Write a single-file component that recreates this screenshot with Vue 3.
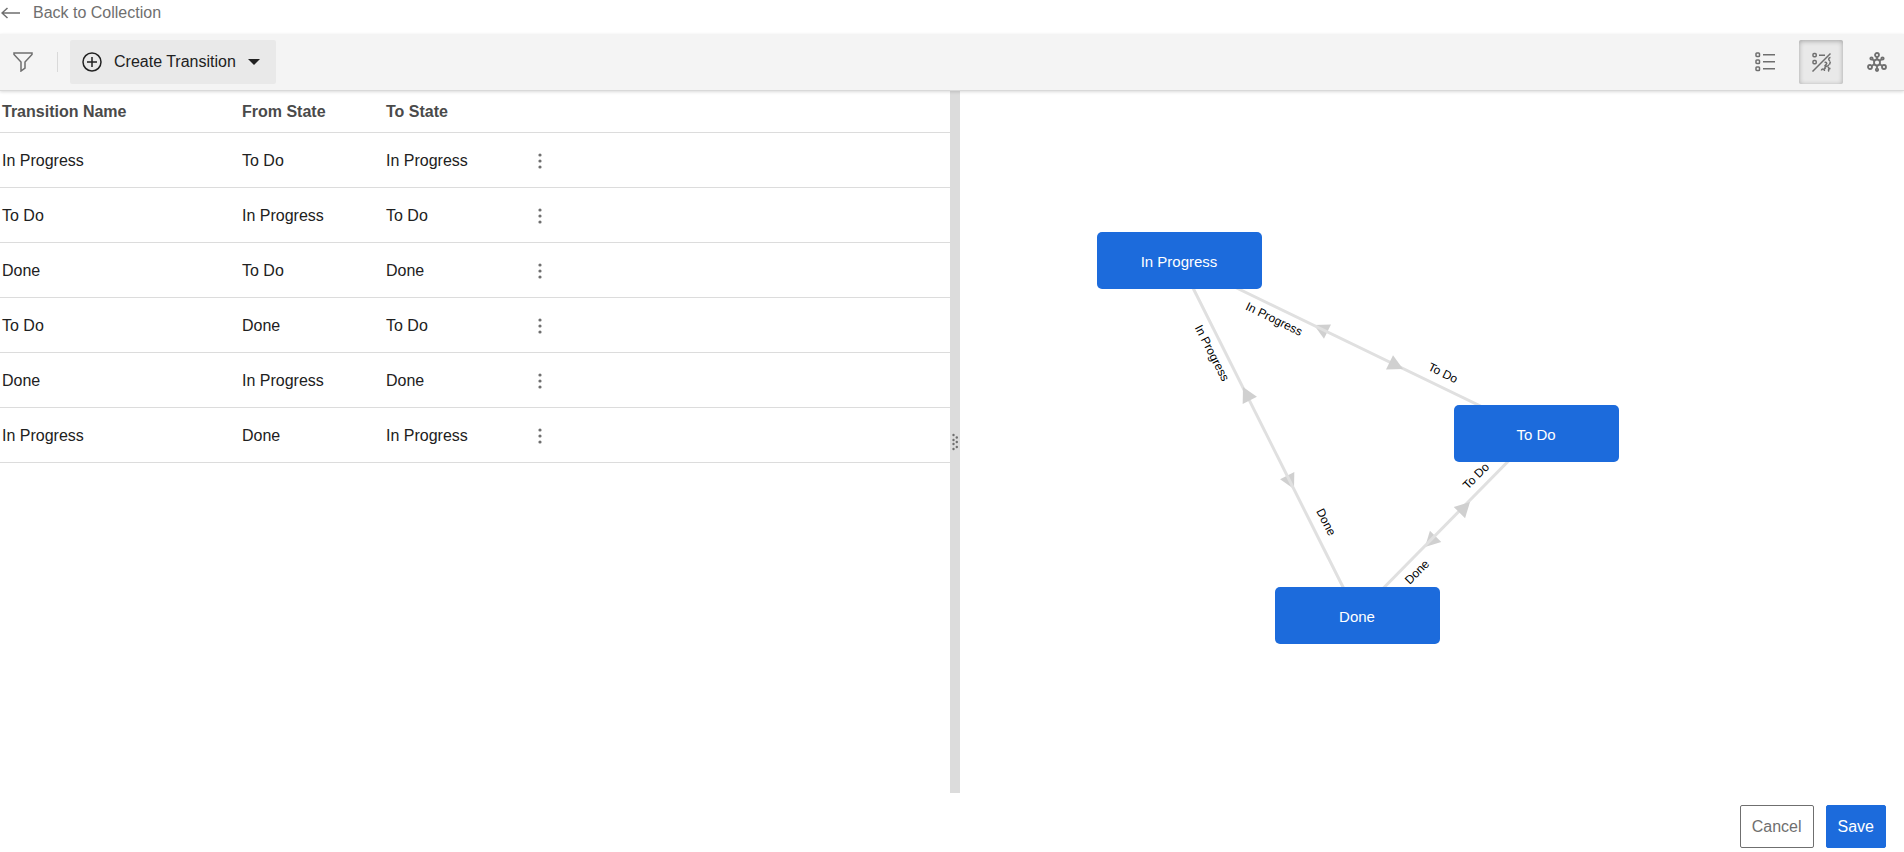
<template>
  <div class="workflow-page">
    <a href="#" class="back-link">
      <svg class="back-icon" width="20" height="12" viewBox="0 0 20 12">
        <path d="M19 6H1M6.500 1L1 6l5.500 5" />
      </svg>
      <span>Back to Collection</span>
    </a>

    <header class="toolbar">
      <button class="icon-button filter-button" aria-label="Filter">
        <svg width="20" height="20" viewBox="0 0 20 20">
          <path d="M1 1h18v1.500l-7 7.500v6l-4 3v-9L1 2.500z" />
        </svg>
      </button>
      <span class="divider"></span>
      <button class="create-button">
        <svg width="20" height="20" viewBox="0 0 20 20">
          <circle cx="10" cy="10" r="9" />
          <path d="M10 5v10M5 10h10" />
        </svg>
        <span>Create Transition</span>
        <span class="caret"></span>
      </button>

      <div class="view-buttons">
        <button
          v-for="view in views"
          :key="view"
          :class="['icon-button', { selected: view === currentView }]"
          :aria-label="view"
          @click="currentView = view"
        >
          <svg v-if="view === 'List'" width="20" height="20" viewBox="0 0 20 20">
            <rect v-for="y in [1, 8, 15]" :key="y" x="1" :y="y" width="3.500" height="3.500" rx="0.800" />
            <path d="M8 2.700h12M8 9.700h12M8 16.700h12" />
          </svg>
          <svg v-else-if="view === 'Split'" width="20" height="20" viewBox="0 0 20 20">
            <rect x="2" y="1.500" width="3.200" height="3.200" rx="1" />
            <rect x="2" y="8.500" width="3.200" height="3.200" rx="1" />
            <path d="M8 3.200h6M1.500 19.500L19.500 1.500" />
            <path d="M19.500 5.500c-2 0-2.500 2.500-.5 3.500M19.500 9.500l-1 3M13.500 10.500c1.500-1.200 3 .8 1.500 2M15 12.500l-1.500 2M13.500 13.500c1.500 1.500 3.500 1 4.500-1M14 15v2M10.500 18.500c0-2 3-2 3 .5M13.500 17l1-1.500M17 15l1.500 2M19.500 16.500c-2 0-2.500 1.500-1.500 3" />
          </svg>
          <svg v-else class="network-icon" width="20" height="20" viewBox="0 0 20 20">
            <circle cx="10" cy="10.500" r="3" />
            <circle cx="10" cy="3" r="2" />
            <circle cx="4.500" cy="6.500" r="1.200" />
            <circle cx="15.500" cy="6.500" r="1.200" />
            <circle cx="3" cy="15" r="2" />
            <circle cx="17" cy="15" r="2" />
            <circle cx="10" cy="17.800" r="1.200" />
            <path d="M10 5v2.500M5.500 7.300l1.900 1.700M14.500 7.300l-1.900 1.700M4.700 14l2.800-2M15.300 14l-2.800-2M10 13.500v3" />
          </svg>
        </button>
      </div>
    </header>

    <main class="panes">
      <section class="list-pane">
        <table class="transition-table">
          <thead>
            <tr>
              <th class="name-column">Transition Name</th>
              <th class="from-column">From State</th>
              <th class="to-column">To State</th>
              <th></th>
            </tr>
          </thead>
          <tbody>
            <tr v-for="(item, index) in transitions" :key="index">
              <td>{{ item.name }}</td>
              <td>{{ item.from }}</td>
              <td>{{ item.to }}</td>
              <td class="menu-cell">
                <button class="menu-button" aria-label="Actions">
                  <svg width="4" height="16" viewBox="0 0 4 16">
                    <circle cx="2" cy="2" r="1.600" />
                    <circle cx="2" cy="8" r="1.600" />
                    <circle cx="2" cy="14" r="1.600" />
                  </svg>
                </button>
              </td>
            </tr>
          </tbody>
        </table>
      </section>

      <div class="splitter">
        <svg width="6" height="18" viewBox="0 0 6 18">
          <circle v-for="y in [2, 7, 11, 16]" :key="y" cx="1.500" :cy="y" r="1.200" />
          <circle v-for="y in [4.5, 9, 14]" :key="y" cx="4.800" :cy="y" r="1.200" />
        </svg>
      </div>

      <section class="diagram-pane">
        <svg class="diagram" viewBox="0 0 944 702">
          <polygon
            v-for="arrow in backArrows"
            :key="arrow.x"
            class="arrow"
            points="0,0 -15,-8 -15,8"
            :transform="`translate(${arrow.x} ${arrow.y}) rotate(${arrow.angle})`"
          />
          <line
            v-for="edge in edges"
            :key="edge.from + edge.to"
            class="edge"
            :x1="nodes[edge.from].x"
            :y1="nodes[edge.from].y"
            :x2="nodes[edge.to].x"
            :y2="nodes[edge.to].y"
          />
          <polygon
            v-for="arrow in frontArrows"
            :key="arrow.x"
            class="arrow"
            points="0,0 -15,-8 -15,8"
            :transform="`translate(${arrow.x} ${arrow.y}) rotate(${arrow.angle})`"
          />
          <g v-for="(node, name) in nodes" :key="name" class="node">
            <rect :x="node.x - 82" :y="node.y - 28" width="165" height="57" rx="5" />
            <text :x="node.x" :y="node.y + 7">{{ name }}</text>
          </g>
          <text
            v-for="label in labels"
            :key="label.x"
            class="edge-label"
            y="4"
            :transform="`translate(${label.x} ${label.y}) rotate(${label.angle})`"
          >
            {{ label.text }}
          </text>
        </svg>
      </section>
    </main>

    <footer class="footer">
      <button class="footer-button cancel">Cancel</button>
      <button class="footer-button save">Save</button>
    </footer>
  </div>
</template>

<script setup>
import { ref } from "vue";

const views = ["List", "Split", "Diagram"];
const currentView = ref("Split");

const transitions = [
  { name: "In Progress", from: "To Do", to: "In Progress" },
  { name: "To Do", from: "In Progress", to: "To Do" },
  { name: "Done", from: "To Do", to: "Done" },
  { name: "To Do", from: "Done", to: "To Do" },
  { name: "Done", from: "In Progress", to: "Done" },
  { name: "In Progress", from: "Done", to: "In Progress" },
];

const nodes = {
  "In Progress": { x: 219, y: 169 },
  "To Do": { x: 576, y: 342 },
  Done: { x: 397, y: 524 },
};

const edges = [
  { from: "In Progress", to: "To Do" },
  { from: "In Progress", to: "Done" },
  { from: "Done", to: "To Do" },
];

// arrows under the lines
const backArrows = [
  { x: 354, y: 234, angle: 206 },
  { x: 334, y: 398, angle: 63 },
  { x: 465, y: 456, angle: 135 },
];

// arrows over the lines
const frontArrows = [
  { x: 443, y: 278, angle: 26 },
  { x: 283, y: 296, angle: 243 },
  { x: 510, y: 411, angle: -45 },
];

const labels = [
  { text: "In Progress", x: 314, y: 228, angle: 26 },
  { text: "To Do", x: 483, y: 282, angle: 26 },
  { text: "In Progress", x: 252, y: 262, angle: 63 },
  { text: "Done", x: 366, y: 431, angle: 63 },
  { text: "To Do", x: 516, y: 385, angle: -45 },
  { text: "Done", x: 457, y: 481, angle: -45 },
];
</script>

<style>
body {
  margin: 0;
}
</style>

<style scoped>
.workflow-page {
  min-height: 100vh;
  display: flex;
  flex-direction: column;
  background-color: #fff;
  color: #212121;
  font-family: "Liberation Sans", Arial, sans-serif;
  font-size: 16px;
  line-height: 20px;
}

button {
  font: inherit;
  margin: 0;
  padding: 0;
  border: none;
  background: none;
  cursor: pointer;
}

svg {
  display: block;
  fill: none;
  stroke: currentColor;
  stroke-width: 1.5;
}

.back-link {
  display: flex;
  align-items: center;
  align-self: flex-start;
  gap: 12px;
  height: 26px;
  padding: 0 0 8px 1px;
  color: #6f6f6f;
  text-decoration: none;
}

.toolbar {
  display: flex;
  align-items: center;
  height: 56px;
  padding: 0 5px 0 1px;
  background-color: #f4f4f4;
  border-bottom: 1px solid #d9d9d9;
  box-shadow: 0 1px 3px rgba(0, 0, 0, 0.15);
  position: relative;
}

.icon-button {
  display: flex;
  align-items: center;
  justify-content: center;
  width: 44px;
  height: 44px;
  border-radius: 2px;
  color: #6f6f6f;
}

.icon-button.selected {
  background-color: #e9e9e9;
  box-shadow: inset 0 1px 5px rgba(0, 0, 0, 0.3);
}

.network-icon {
  stroke-width: 1.8;
}

.divider {
  width: 1px;
  height: 20px;
  margin: 0 12px;
  background-color: #d9d9d9;
}

.create-button {
  display: flex;
  align-items: center;
  height: 44px;
  padding: 0 16px 0 12px;
  border-radius: 2px;
  background-color: #e9e9e9;
  color: #212121;
}

.create-button svg {
  margin-right: 12px;
}

.caret {
  margin-left: 12px;
  border: 6px solid transparent;
  border-top-color: #212121;
  border-bottom: none;
}

.view-buttons {
  display: flex;
  gap: 12px;
  margin-left: auto;
}

.panes {
  flex: 1;
  display: flex;
}

.list-pane {
  flex: 950 1 0;
  min-width: 0;
}

.transition-table {
  width: 100%;
  table-layout: fixed;
  border-collapse: separate;
  border-spacing: 0;
}

.transition-table th,
.transition-table td {
  padding: 0 0 0 2px;
  text-align: left;
  border-bottom: 1px solid #dcdcdc;
}

.transition-table th {
  height: 41px;
  font-weight: bold;
  color: #4a4a4a;
}

.transition-table td {
  height: 52px;
  padding-top: 2px;
}

.name-column {
  width: 238px;
}

.from-column {
  width: 142px;
}

.to-column {
  width: 142px;
}

.transition-table .menu-cell {
  padding-left: 0;
}

.menu-button {
  display: flex;
  align-items: center;
  justify-content: center;
  width: 24px;
  height: 24px;
  color: #6f6f6f;
}

.menu-button svg,
.splitter svg {
  fill: currentColor;
  stroke: none;
}

.splitter {
  display: flex;
  align-items: center;
  justify-content: center;
  width: 10px;
  background-color: #dcdcdc;
  color: #6f6f6f;
  cursor: col-resize;
}

.diagram-pane {
  flex: 944 1 0;
  min-width: 0;
}

.diagram {
  width: 100%;
  height: 100%;
  stroke: none;
}

.edge {
  stroke: #e0e0e0;
  stroke-width: 3;
}

.arrow {
  fill: #d0d0d0;
}

.node rect {
  fill: #1c6bdc;
}

.node text {
  fill: #fff;
  font-size: 15px;
  text-anchor: middle;
}

.edge-label {
  fill: #000;
  font-size: 12px;
  text-anchor: middle;
}

.footer {
  display: flex;
  justify-content: flex-end;
  gap: 12px;
  padding: 12px 18px 4px;
}

.footer-button {
  height: 43px;
  padding: 0 11px;
  border: 1px solid #6f6f6f;
  border-radius: 2px;
  color: #6f6f6f;
}

.footer-button.save {
  border-color: #1c6bdc;
  background-color: #1c6bdc;
  color: #fff;
}
</style>
